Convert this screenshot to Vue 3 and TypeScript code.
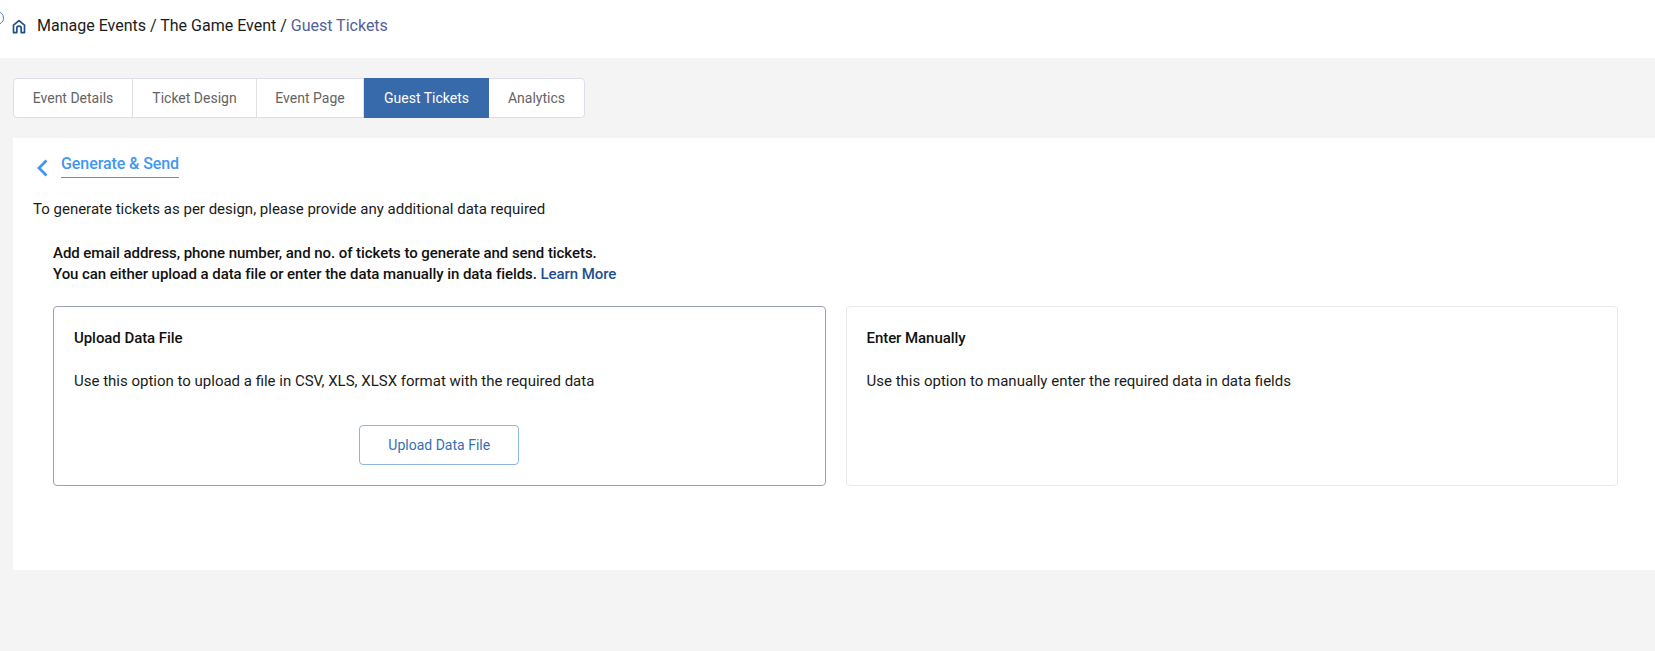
<script setup lang="ts">
const tabs: string[] = ['Event Details', 'Ticket Design', 'Event Page', 'Guest Tickets', 'Analytics']
</script>

<template>
  <div class="page">
    <header class="crumbs">
      <span class="stray"></span>
      <svg class="home" width="14" height="15" viewBox="0 0 14 15" fill="none" stroke="#1f4f8f" stroke-width="1.7" stroke-linejoin="round">
        <path d="M1.5 6.2 7 1.6l5.5 4.6v7.4H9.2V9.4a2.2 2.2 0 0 0-4.4 0v4.2H1.5z" />
      </svg>
      <span class="trail">Manage Events / The Game Event / <span class="current">Guest Tickets</span></span>
    </header>

    <main class="body">
      <nav class="tabs">
        <button v-for="t in tabs" :key="t" class="tab" :class="{ active: t === 'Guest Tickets' }">{{ t }}</button>
      </nav>

      <section class="panel">
        <div class="title-row">
          <svg class="back" width="14" height="20" viewBox="0 0 14 20" fill="none" stroke="#3f97f2" stroke-width="2.8">
            <path d="M11.5 2.5 4 10l7.5 7.5" />
          </svg>
          <h2 class="title">Generate &amp; Send</h2>
        </div>
        <p class="lead">To generate tickets as per design, please provide any additional data required</p>
        <div class="inner">
          <p class="intro">
            Add email address, phone number, and no. of tickets to generate and send tickets.<br />
            You can either upload a data file or enter the data manually in data fields.
            <a class="more">Learn More</a>
          </p>
          <div class="cards">
            <article class="card selected">
              <h3>Upload Data File</h3>
              <p>Use this option to upload a file in CSV, XLS, XLSX format with the required data</p>
              <button class="upload">Upload Data File</button>
            </article>
            <article class="card">
              <h3>Enter Manually</h3>
              <p>Use this option to manually enter the required data in data fields</p>
            </article>
          </div>
        </div>
      </section>
    </main>
  </div>
</template>

<style>
html, body { margin: 0; background: #f4f4f4; }
</style>

<style scoped>
.page {
  width: 1655px;
  height: 651px;
  overflow: hidden;
  background: #f4f4f4;
  font-family: Roboto, "Liberation Sans", sans-serif;
  color: #111;
}
.crumbs {
  position: relative;
  height: 58px;
  background: #fff;
  display: flex;
  align-items: center;
  padding: 0 0 8px 12px;
  box-sizing: border-box;
  font-size: 16px;
}
.stray {
  position: absolute;
  left: -10px;
  top: 11px;
  width: 12px;
  height: 12px;
  border: 1px solid #5b7fb5;
  border-radius: 50%;
}
.home { margin: 2px 11px 0 0; flex: none; }
.trail { color: #1b1b1b; }
.current { color: #52609c; }
.body { padding: 20px 0 0 13px; }
.tabs {
  display: inline-flex;
  vertical-align: top;
  height: 40px;
  box-sizing: border-box;
  background: #fff;
  border: 1px solid #dddee8;
  border-radius: 4px;
}
.tab {
  appearance: none;
  border: 0;
  border-right: 1px solid #dddee8;
  background: none;
  padding: 0;
  font: 14px Roboto, sans-serif;
  color: #646464;
  margin: 0;
}
.tab:nth-child(1) { width: 119px; border-radius: 4px 0 0 4px; }
.tab:nth-child(2) { width: 124px; }
.tab:nth-child(3) { width: 107px; }
.tab:nth-child(4) { width: 125px; border-right: 0; }
.tab:nth-child(5) { width: 95px; border-right: 0; }
.tab.active {
  background: #376aab;
  color: #fff;
  margin: -1px 0;
}
.panel {
  margin-top: 20px;
  height: 432px;
  box-sizing: border-box;
  background: #fff;
  padding: 15px 0 0 20px;
}
.title-row { display: flex; align-items: flex-start; height: 44px; }
.back { margin: 5px 0 0 2px; flex: none; }
.title {
  margin: 1px 0 0 12px;
  font-size: 16px;
  font-weight: 500;
  line-height: 20px;
  letter-spacing: -0.08px;
  color: #3f97f2;
  padding-bottom: 3px;
  border-bottom: 1px solid #3f97f2;
  height: 20px;
}
.lead { margin: 0; font-size: 15px; line-height: 20px; padding-top: 2px; color: #1b1b1b; }
.inner { padding: 24px 37px 0 20px; }
.intro { margin: 0; font-size: 15px; line-height: 21px; font-weight: 500; letter-spacing: -0.06px; color: #111; }
.more { color: #1f4f8f; }
.cards { display: flex; gap: 20px; margin-top: 21px; }
.card {
  flex: 1;
  height: 180px;
  box-sizing: border-box;
  background: #fff;
  border: 1px solid #e8e8e8;
  border-radius: 4px;
  padding: 21px 20px 0;
}
.card.selected { border-color: #9aa2b4; }
.card h3 { margin: 0; font-size: 15px; font-weight: 500; line-height: 20px; letter-spacing: -0.06px; color: #111; }
.card p { margin: 23px 0 0; font-size: 15px; line-height: 20px; color: #1b1b1b; }
.upload {
  display: block;
  margin: 34px auto 0;
  width: 160px;
  height: 40px;
  background: #fff;
  border: 1px solid #8ab6e0;
  border-radius: 4px;
  font: 14px Roboto, sans-serif;
  color: #376fb5;
}
</style>
